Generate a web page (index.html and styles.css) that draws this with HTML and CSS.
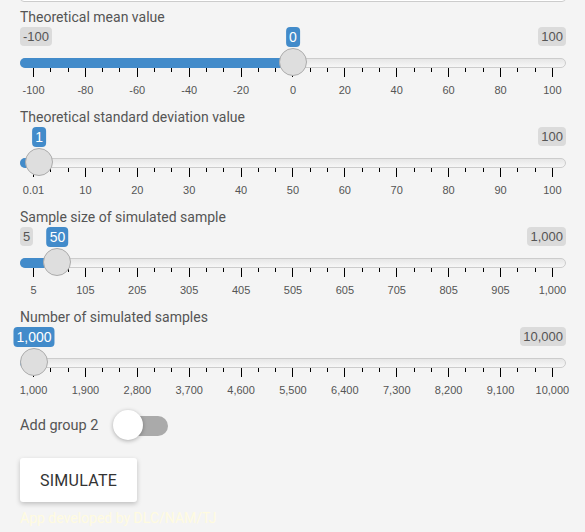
FILE: index.html
```html
<!DOCTYPE html>
<html lang="en">
<head>
<meta charset="utf-8">
<title>Simulation</title>
<link rel="stylesheet" href="styles.css">
</head>
<body>
<div class="page">
  <div class="topbox"></div>

  <div class="field">
    <label class="field-label">Theoretical mean value</label>
    <div class="irs" style="--p:0.5">
      <div class="irs-minmax"><span class="irs-min">-100</span><span class="irs-max">100</span></div>
      <div class="irs-line"></div>
      <div class="irs-ticks"><i></i><i></i><i></i><i></i><i></i><i></i><i></i><i></i><i></i><i></i><i></i><i></i><i></i><i></i><i></i><i></i><i></i><i></i><i></i><i></i><i></i><i></i><i></i><i></i><i></i><i></i><i></i><i></i><i></i><i></i><i></i></div>
      <div class="irs-grid-text"><span><b>-100</b></span><span><b>-80</b></span><span><b>-60</b></span><span><b>-40</b></span><span><b>-20</b></span><span><b>0</b></span><span><b>20</b></span><span><b>40</b></span><span><b>60</b></span><span><b>80</b></span><span><b>100</b></span></div>
      <div class="irs-bar"></div>
      <span class="irs-handle"></span>
      <span class="irs-single">0</span>
    </div>
  </div>

  <div class="field">
    <label class="field-label">Theoretical standard deviation value</label>
    <div class="irs" style="--p:0.0099">
      <div class="irs-minmax"><span class="irs-min is-hidden">0.01</span><span class="irs-max">100</span></div>
      <div class="irs-line"></div>
      <div class="irs-ticks"><i></i><i></i><i></i><i></i><i></i><i></i><i></i><i></i><i></i><i></i><i></i><i></i><i></i><i></i><i></i><i></i><i></i><i></i><i></i><i></i><i></i><i></i><i></i><i></i><i></i><i></i><i></i><i></i><i></i><i></i><i></i></div>
      <div class="irs-grid-text"><span><b>0.01</b></span><span><b>10</b></span><span><b>20</b></span><span><b>30</b></span><span><b>40</b></span><span><b>50</b></span><span><b>60</b></span><span><b>70</b></span><span><b>80</b></span><span><b>90</b></span><span><b>100</b></span></div>
      <div class="irs-bar"></div>
      <span class="irs-handle"></span>
      <span class="irs-single">1</span>
    </div>
  </div>

  <div class="field">
    <label class="field-label">Sample size of simulated sample</label>
    <div class="irs" style="--p:0.04523">
      <div class="irs-minmax"><span class="irs-min">5</span><span class="irs-max">1,000</span></div>
      <div class="irs-line"></div>
      <div class="irs-ticks"><i></i><i></i><i></i><i></i><i></i><i></i><i></i><i></i><i></i><i></i><i></i><i></i><i></i><i></i><i></i><i></i><i></i><i></i><i></i><i></i><i></i><i></i><i></i><i></i><i></i><i></i><i></i><i></i><i></i><i></i><i></i></div>
      <div class="irs-grid-text"><span><b>5</b></span><span><b>105</b></span><span><b>205</b></span><span><b>305</b></span><span><b>405</b></span><span><b>505</b></span><span><b>605</b></span><span><b>705</b></span><span><b>805</b></span><span><b>905</b></span><span><b>1,000</b></span></div>
      <div class="irs-bar"></div>
      <span class="irs-handle"></span>
      <span class="irs-single">50</span>
    </div>
  </div>

  <div class="field">
    <label class="field-label">Number of simulated samples</label>
    <div class="irs" style="--p:0">
      <div class="irs-minmax"><span class="irs-min is-hidden">1,000</span><span class="irs-max">10,000</span></div>
      <div class="irs-line"></div>
      <div class="irs-ticks"><i></i><i></i><i></i><i></i><i></i><i></i><i></i><i></i><i></i><i></i><i></i><i></i><i></i><i></i><i></i><i></i><i></i><i></i><i></i><i></i><i></i><i></i><i></i><i></i><i></i><i></i><i></i><i></i><i></i><i></i><i></i></div>
      <div class="irs-grid-text"><span><b>1,000</b></span><span><b>1,900</b></span><span><b>2,800</b></span><span><b>3,700</b></span><span><b>4,600</b></span><span><b>5,500</b></span><span><b>6,400</b></span><span><b>7,300</b></span><span><b>8,200</b></span><span><b>9,100</b></span><span><b>10,000</b></span></div>
      <div class="irs-bar"></div>
      <span class="irs-handle"></span>
      <span class="irs-single">1,000</span>
    </div>
  </div>

  <div class="switch-row">
    <span class="switch-label">Add group 2</span>
    <span class="switch"><span class="switch-track"></span><span class="switch-knob"></span></span>
  </div>

  <button class="btn" type="button">Simulate</button>

  <div class="footer">App developed by DLC/NAM/TJ</div>
</div>
</body>
</html>
```

FILE: styles.css
```css
html, body {
  margin: 0;
  padding: 0;
  background: #f4f4f4;
}

body {
  font-family: Roboto, "Noto Sans", sans-serif;
  color: #555;
  overflow: hidden;
}

.page {
  padding: 0 19px 0 20px;
}

.topbox {
  height: 12px;
  box-sizing: border-box;
  margin-top: -10px;
  border: 1px solid #cccccc;
  border-radius: 4px;
  background: #ffffff;
}

.field {
  margin-bottom: 10px;
}

.topbox + .field {
  margin-top: 5px;
}

.field-label {
  display: block;
  font-size: 14px;
  line-height: 20px;
  color: #555;
}

/* ion range slider */
.irs {
  position: relative;
  height: 70px;
  font-family: "Liberation Sans", Arial, sans-serif;
}

.irs-minmax {
  display: flex;
  justify-content: space-between;
  height: 19px;
}

.irs-min, .irs-max {
  display: block;
  padding: 1px 3px;
  font-size: 13px;
  line-height: 17px;
  color: #555;
  background: rgba(0, 0, 0, 0.1);
  border-radius: 4px;
}

.is-hidden {
  visibility: hidden;
}

.irs-line {
  margin-top: 12px;
  height: 10px;
  box-sizing: border-box;
  border: 1px solid #cccccc;
  border-radius: 8px;
  background: linear-gradient(to bottom, #dedede -50%, #ffffff 150%);
}

.irs-ticks {
  display: flex;
  justify-content: space-between;
  align-items: flex-start;
  margin: 0 13px;
  height: 9px;
}

.irs-ticks i {
  display: block;
  width: 1px;
  height: 4px;
  background: #000;
}

.irs-ticks i:nth-child(3n+1) {
  height: 9px;
}

.irs-grid-text {
  display: flex;
  justify-content: space-between;
  margin: 7px 13px 0;
  height: 13px;
}

.irs-grid-text span {
  display: flex;
  justify-content: center;
  width: 1px;
}

.irs-grid-text b {
  display: block;
  flex: none;
  font-weight: normal;
  font-size: 11px;
  line-height: 13px;
  color: #555;
  white-space: nowrap;
}

.irs-bar {
  position: absolute;
  left: 0;
  top: 31px;
  height: 10px;
  width: calc(14px + var(--p) * (100% - 28px));
  background: #428bca;
  border-radius: 5px 0 0 5px;
}

.irs-handle {
  position: absolute;
  top: 21px;
  left: calc(var(--p) * (100% - 28px));
  width: 28px;
  height: 28px;
  box-sizing: border-box;
  border: 1px solid #ababab;
  border-radius: 50%;
  background: #dedede;
}

.irs-single {
  position: absolute;
  top: 0;
  left: calc(14px + var(--p) * (100% - 28px));
  transform: translateX(-50%);
  padding: 1px 3px;
  font-size: 14px;
  line-height: 18px;
  color: #fff;
  background: #428bca;
  border-radius: 4px;
  white-space: nowrap;
}

/* switch */
.switch-row {
  display: flex;
  align-items: center;
  margin-top: 13px;
  height: 30px;
}

.switch-label {
  font-size: 14.5px;
  color: #555;
}

.switch {
  position: relative;
  display: block;
  margin-left: 15px;
  width: 55px;
  height: 30px;
}

.switch-track {
  display: block;
  margin: 6px 0 0 5px;
  width: 50px;
  height: 20px;
  border-radius: 10px;
  background: #aaaaaa;
}

.switch-knob {
  position: absolute;
  left: 0;
  top: 0;
  width: 30px;
  height: 30px;
  border-radius: 50%;
  background: #fff;
  box-shadow: 0 1px 4px rgba(0, 0, 0, 0.3);
}

/* button */
.btn {
  display: block;
  margin-top: 18px;
  width: 117px;
  height: 44px;
  padding: 0;
  border: none;
  border-radius: 3px;
  background: #fff;
  box-shadow: 0 2px 5px rgba(0, 0, 0, 0.22);
  font-family: Roboto, "Noto Sans", sans-serif;
  font-size: 16px;
  letter-spacing: 0.25px;
  text-transform: uppercase;
  color: #333;
}

.footer {
  margin-top: 6px;
  font-size: 14px;
  line-height: 20px;
  color: #fffbe0;
}
```
